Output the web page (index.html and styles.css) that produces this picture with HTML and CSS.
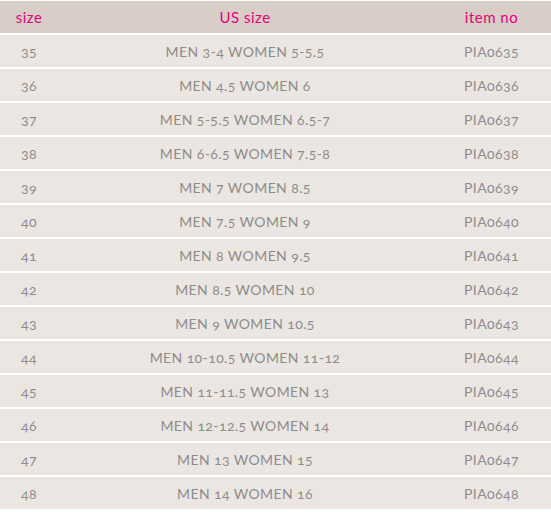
FILE: index.html
```html
<!DOCTYPE html>
<html>
<head>
<meta charset="utf-8">
<link rel="stylesheet" href="styles.css">
</head>
<body>
<div class="table">
  <div class="row head"><div class="c1">size</div><div class="c2">US size</div><div class="c3">item no</div></div>
  <div class="row"><div class="c1">35</div><div class="c2">MEN 3-4 WOMEN 5-5.5</div><div class="c3">PIA0635</div></div>
  <div class="row"><div class="c1">36</div><div class="c2">MEN 4.5 WOMEN 6</div><div class="c3">PIA0636</div></div>
  <div class="row"><div class="c1">37</div><div class="c2">MEN 5-5.5 WOMEN 6.5-7</div><div class="c3">PIA0637</div></div>
  <div class="row"><div class="c1">38</div><div class="c2">MEN 6-6.5 WOMEN 7.5-8</div><div class="c3">PIA0638</div></div>
  <div class="row"><div class="c1">39</div><div class="c2">MEN 7 WOMEN 8.5</div><div class="c3">PIA0639</div></div>
  <div class="row"><div class="c1">40</div><div class="c2">MEN 7.5 WOMEN 9</div><div class="c3">PIA0640</div></div>
  <div class="row"><div class="c1">41</div><div class="c2">MEN 8 WOMEN 9.5</div><div class="c3">PIA0641</div></div>
  <div class="row"><div class="c1">42</div><div class="c2">MEN 8.5 WOMEN 10</div><div class="c3">PIA0642</div></div>
  <div class="row"><div class="c1">43</div><div class="c2">MEN 9 WOMEN 10.5</div><div class="c3">PIA0643</div></div>
  <div class="row"><div class="c1">44</div><div class="c2">MEN 10-10.5 WOMEN 11-12</div><div class="c3">PIA0644</div></div>
  <div class="row"><div class="c1">45</div><div class="c2">MEN 11-11.5 WOMEN 13</div><div class="c3">PIA0645</div></div>
  <div class="row"><div class="c1">46</div><div class="c2">MEN 12-12.5 WOMEN 14</div><div class="c3">PIA0646</div></div>
  <div class="row"><div class="c1">47</div><div class="c2">MEN 13 WOMEN 15</div><div class="c3">PIA0647</div></div>
  <div class="row"><div class="c1">48</div><div class="c2">MEN 14 WOMEN 16</div><div class="c3">PIA0648</div></div>
</div>
</body>
</html>
```
FILE: styles.css
```css
html, body {
  margin: 0;
  padding: 0;
  background: #ffffff;
}
.table {
  display: flex;
  flex-direction: column;
  gap: 2px;
  padding-top: 1px;
  width: 551px;
  font-family: Lato, "Open Sans", sans-serif;
  font-variant-numeric: oldstyle-nums;
  font-size: 14px;
}
.row {
  display: grid;
  grid-template-columns: 58px 374px 119px;
  height: 32px;
  align-items: center;
  background: #ebe6e2;
  color: #8e8c8b;
  letter-spacing: 0.4px;
}
.row > div {
  text-align: center;
}
.head {
  background: #d9cec7;
  color: #e5007d;
  font-size: 15px;
  letter-spacing: 0.5px;
}
```
